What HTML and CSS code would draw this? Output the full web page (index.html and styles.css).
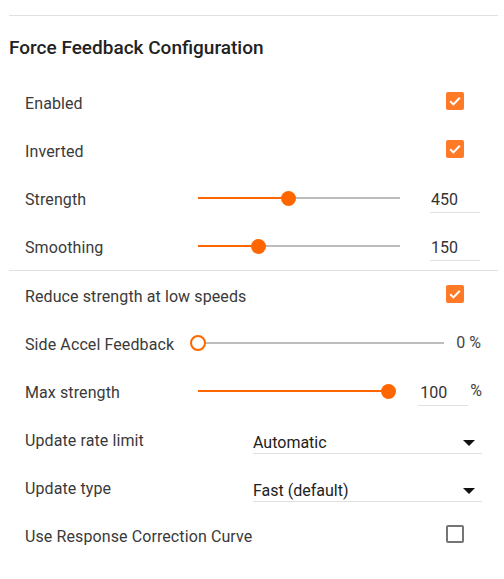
FILE: index.html
```html
<!DOCTYPE html>
<html lang="en">
<head>
<meta charset="utf-8">
<title>Force Feedback Configuration</title>
<link rel="stylesheet" href="styles.css">
</head>
<body>
<div class="panel">
  <div class="rule"></div>
  <h2 class="title">Force Feedback Configuration</h2>

  <div class="group">
    <div class="row">
      <span class="label">Enabled</span>
      <span class="check on"><svg viewBox="0 0 18 18" width="18" height="18"><path d="M4.2 9.3l3.2 3.1 6.4-6.6" fill="none" stroke="#fff" stroke-width="2"/></svg></span>
    </div>
    <div class="row">
      <span class="label">Inverted</span>
      <span class="check on"><svg viewBox="0 0 18 18" width="18" height="18"><path d="M4.2 9.3l3.2 3.1 6.4-6.6" fill="none" stroke="#fff" stroke-width="2"/></svg></span>
    </div>
    <div class="row">
      <span class="label label-fixed">Strength</span>
      <div class="slider"><div class="fill" style="width:45%"></div><div class="thumb" style="left:45%"></div></div>
      <div class="num">450</div>
    </div>
    <div class="row">
      <span class="label label-fixed">Smoothing</span>
      <div class="slider"><div class="fill" style="width:30%"></div><div class="thumb" style="left:30%"></div></div>
      <div class="num">150</div>
    </div>
  </div>

  <div class="group">
    <div class="row">
      <span class="label">Reduce strength at low speeds</span>
      <span class="check on"><svg viewBox="0 0 18 18" width="18" height="18"><path d="M4.2 9.3l3.2 3.1 6.4-6.6" fill="none" stroke="#fff" stroke-width="2"/></svg></span>
    </div>
    <div class="row">
      <span class="label label-fixed">Side Accel Feedback</span>
      <div class="slider"><div class="fill" style="width:0%"></div><div class="thumb hollow" style="left:0%"></div></div>
      <span class="value">0 %</span>
    </div>
    <div class="row">
      <span class="label label-fixed">Max strength</span>
      <div class="slider"><div class="fill" style="width:100%"></div><div class="thumb" style="left:100%"></div></div>
      <div class="num num-short">100</div>
      <span class="unit">%</span>
    </div>
    <div class="row">
      <span class="label label-wide">Update rate limit</span>
      <div class="select"><span class="select-text">Automatic</span><span class="arrow"></span></div>
    </div>
    <div class="row">
      <span class="label label-wide">Update type</span>
      <div class="select"><span class="select-text">Fast (default)</span><span class="arrow"></span></div>
    </div>
    <div class="row">
      <span class="label">Use Response Correction Curve</span>
      <span class="check off"></span>
    </div>
  </div>
</div>
</body>
</html>
```

FILE: styles.css
```css
html, body {
  margin: 0;
  padding: 0;
  background: #ffffff;
}

body {
  font-family: Roboto, "Liberation Sans", Arial, sans-serif;
  color: #333333;
}

.panel {
  margin: 0 6px 0 9px;
  padding-top: 15px;
}

.rule {
  height: 1px;
  background: #e0e0e0;
}

.title {
  margin: 20px 0 18px 0;
  font-size: 19px;
  line-height: 24px;
  font-weight: 500;
  color: #222222;
}

.group {
  border-bottom: 1px solid #e0e0e0;
}

.group:last-child {
  border-bottom: none;
}

.row {
  height: 48px;
  padding: 0 16px;
  display: flex;
  align-items: center;
  font-size: 16px;
  line-height: 20px;
}

.label {
  flex: 1;
  padding-top: 4px;
  color: #3a3a3a;
  letter-spacing: 0.1px;
  white-space: nowrap;
}

.label-fixed {
  flex: 0 0 173px;
}

.label-wide {
  flex: 0 0 228px;
}

.check {
  width: 18px;
  height: 18px;
  box-sizing: border-box;
  border-radius: 2px;
  margin-right: 18px;
  margin-top: -2px;
  display: flex;
}

.check.on {
  background: #ff7a26;
}

.check.off {
  border: 2px solid #757575;
}

.slider {
  flex: 1;
  position: relative;
  height: 2px;
  background: #bdbdbd;
}

.fill {
  height: 2px;
  background: #ff6600;
}

.thumb {
  position: absolute;
  top: 1px;
  width: 15px;
  height: 15px;
  margin: -7.5px 0 0 -7.5px;
  border-radius: 50%;
  background: #ff6600;
}

.thumb.hollow {
  width: 16px;
  height: 16px;
  margin: -8px 0 0 -8px;
  box-sizing: border-box;
  border: 2px solid #ff6600;
  background: #ffffff;
}

.num {
  width: 49px;
  margin: 0 2px 0 30px;
  padding: 6px 0 2px 1px;
  border-bottom: 1px solid #e0e0e0;
  color: #333333;
}

.num-short {
  margin-right: 0;
  padding-left: 2px;
  width: 48px;
}

.unit {
  margin-left: 2px;
  color: #444444;
}

.value {
  margin: 0 1px 0 12px;
  color: #444444;
}

.select {
  flex: 1;
  display: flex;
  align-items: center;
  justify-content: space-between;
  padding-top: 8px;
  border-bottom: 1px solid #e0e0e0;
}

.select-text {
  color: #222222;
}

.arrow {
  width: 0;
  height: 0;
  margin: 0 7px 0 0;
  border-left: 6px solid transparent;
  border-right: 6px solid transparent;
  border-top: 6px solid #111111;
}
```
